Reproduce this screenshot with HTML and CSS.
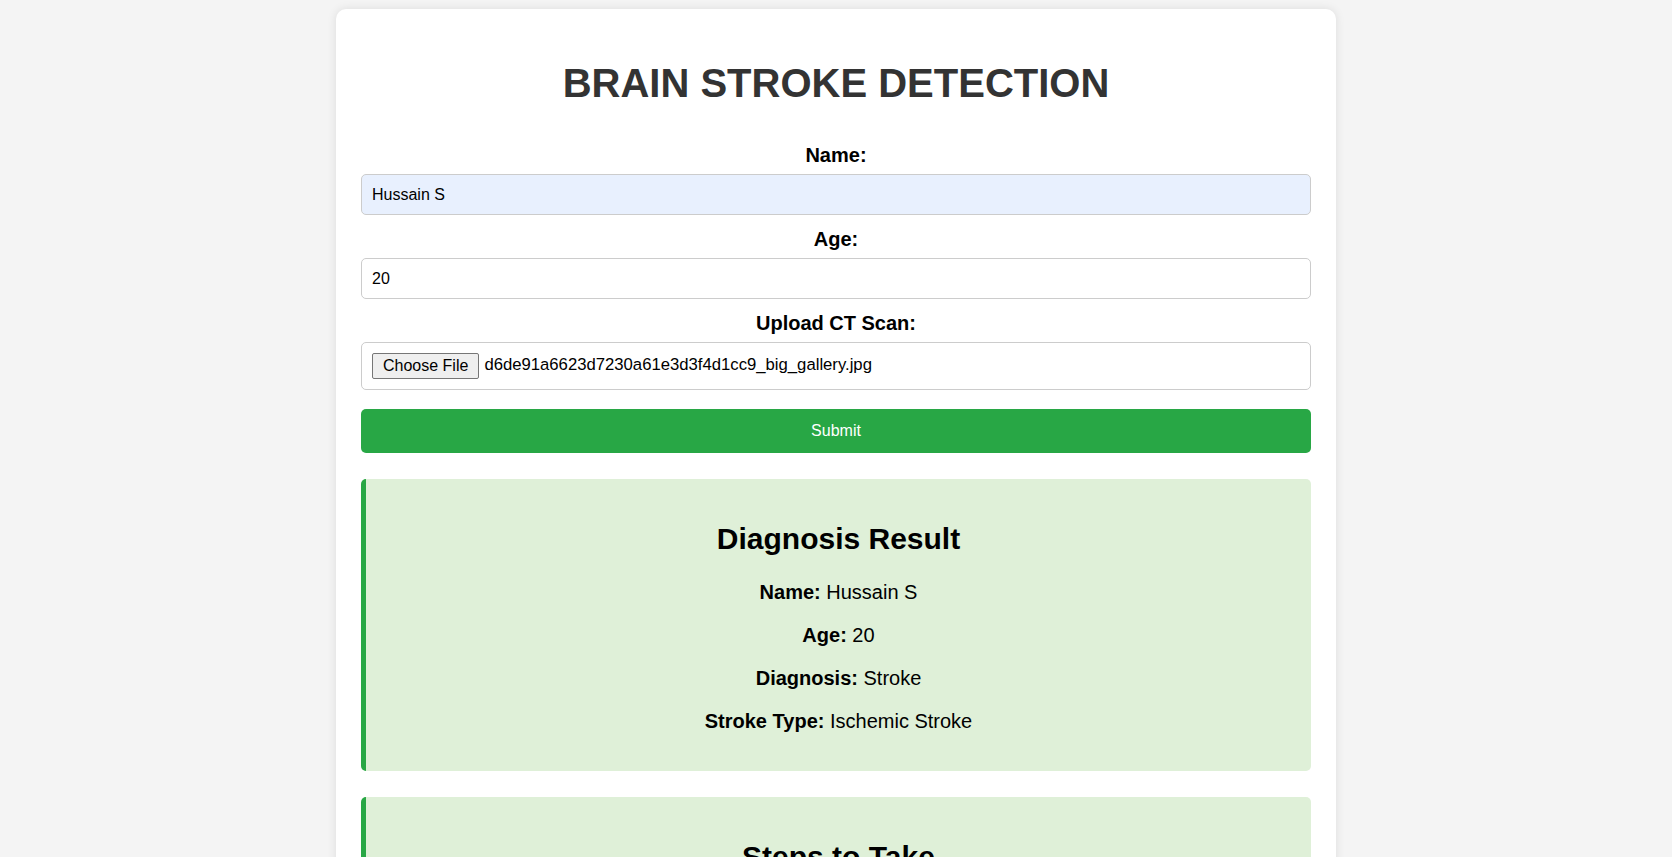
FILE: index.html
```html
<!DOCTYPE html>
<html lang="en">
<head>
<meta charset="utf-8">
<title>Brain Stroke Detection</title>
<link rel="stylesheet" href="styles.css">
</head>
<body>
<div class="card">
  <h1 class="title">BRAIN STROKE DETECTION</h1>
  <form class="form">
    <label class="label" for="name">Name:</label>
    <input class="field field-autofill" id="name" type="text" value="Hussain S">
    <label class="label" for="age">Age:</label>
    <input class="field" id="age" type="text" value="20">
    <label class="label">Upload CT Scan:</label>
    <div class="file-box">
      <button type="button" class="file-btn">Choose File</button>
      <span class="file-name">d6de91a6623d7230a61e3d3f4d1cc9_big_gallery.jpg</span>
    </div>
    <button type="button" class="submit">Submit</button>
  </form>
  <div class="result">
    <h2 class="result-title">Diagnosis Result</h2>
    <p class="result-line"><strong>Name:</strong> Hussain S</p>
    <p class="result-line"><strong>Age:</strong> 20</p>
    <p class="result-line"><strong>Diagnosis:</strong> Stroke</p>
    <p class="result-line"><strong>Stroke Type:</strong> Ischemic Stroke</p>
  </div>
  <div class="result">
    <h2 class="result-title">Steps to Take</h2>
    <p class="result-line">Seek immediate medical attention.</p>
    <p class="result-line">Follow the treatment plan prescribed by your doctor.</p>
  </div>
</div>
</body>
</html>
```

FILE: styles.css
```css
* { box-sizing: border-box; }

body {
  margin: 0;
  background: #f4f4f4;
  font-family: "Liberation Sans", Arial, sans-serif;
  color: #000;
}

.card {
  width: 1000px;
  margin: 9px auto 20px;
  padding: 25px;
  background: #fff;
  border-radius: 10px;
  box-shadow: 0 0 10px rgba(0, 0, 0, 0.1);
}

.title {
  margin: 26px 0 25px;
  font-size: 40px;
  line-height: 46px;
  font-weight: bold;
  color: #333;
  text-align: center;
}

.form {
  display: flex;
  flex-direction: column;
}

.label {
  display: block;
  margin: 13px 0 7px;
  font-size: 20px;
  line-height: 23px;
  font-weight: bold;
  text-align: center;
}

.field {
  height: 41px;
  padding: 0 10px;
  border: 1px solid #ccc;
  border-radius: 5px;
  font-family: "Liberation Sans", Arial, sans-serif;
  font-size: 16px;
  color: #000;
  background: #fff;
  outline: none;
}

.field-autofill {
  background: #e8f0fe;
}

.file-box {
  display: flex;
  align-items: center;
  height: 48px;
  padding: 10px;
  border: 1px solid #ccc;
  border-radius: 5px;
}

.file-btn {
  height: 26px;
  margin: 0 5px 0 0;
  padding: 0 10px;
  font-family: "Liberation Sans", Arial, sans-serif;
  font-size: 16px;
  color: #000;
  background: #efefef;
  border: 1px solid #767676;
  border-radius: 2px;
}

.file-name {
  font-size: 16.7px;
  line-height: 20px;
  margin-top: -2px;
}

.submit {
  height: 44px;
  margin-top: 19px;
  border: none;
  border-radius: 5px;
  background: #28a745;
  color: #fff;
  font-family: "Liberation Sans", Arial, sans-serif;
  font-size: 16px;
}

.result {
  margin-top: 26px;
  padding: 18px 20px;
  background: #dff0d8;
  border-left: 5px solid #28a745;
  border-radius: 5px;
  text-align: center;
}

.result-title {
  margin: 25px 0 25px;
  font-size: 30px;
  line-height: 34px;
  font-weight: bold;
}

.result-line {
  margin: 20px 0;
  font-size: 20px;
  line-height: 23px;
}
```
